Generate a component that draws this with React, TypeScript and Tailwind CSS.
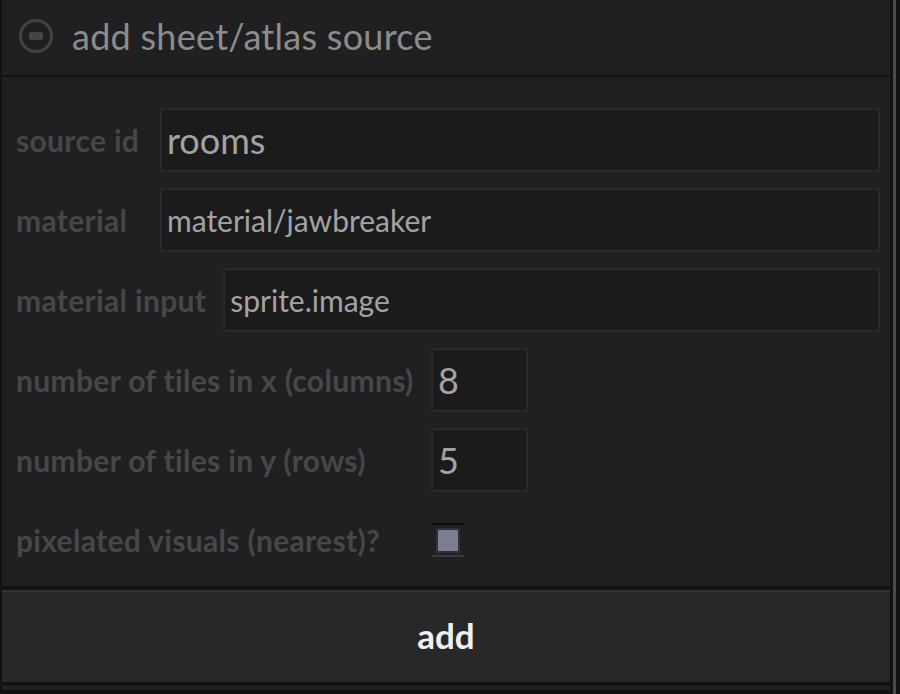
import React from "react";

const font = { fontFamily: "Lato, 'Noto Sans', sans-serif" };

function Field({ label, value, big, labelClass, inputClass }: { label: string; value: string; big?: boolean; labelClass: string; inputClass: string }) {
  return (
    <div className="flex h-[64px] items-center">
      <div className={`whitespace-nowrap text-[30px] font-bold tracking-[0.33px] text-[#474749] ${labelClass}`}>{label}</div>
      <div className={`flex h-[64px] items-center border-2 border-[#2a2a2c] bg-[#1b1b1c] pl-[5px] ${inputClass}`}>
        <span className={`${big ? "text-[36px]" : "text-[30px]"} text-[#a3a3a3] leading-none`}>{value}</span>
      </div>
    </div>
  );
}

export default function App() {
  return (
    <div className="flex h-[694px] w-[900px] overflow-hidden bg-[#121212]" style={font}>
      <div className="ml-[2px] flex w-[888px] flex-col">
        <div className="flex h-[75px] items-center bg-[#202022] pb-[3px] pl-[15px]">
          <svg width="38" height="38" viewBox="0 0 38 38">
            <circle cx="19" cy="19" r="15.5" fill="none" stroke="#444446" strokeWidth="3" />
            <rect x="12" y="15" width="14" height="8" rx="2" fill="#444446" />
          </svg>
          <span className="ml-[17px] text-[36px] tracking-[0.27px] text-[#8c8c8c]">add sheet/atlas source</span>
        </div>
        <div className="h-[2px] bg-[#121212]" />
        <div className="flex h-[509px] flex-col gap-[16px] bg-[#202022] pl-[14px] pr-[10px] pt-[31px]">
          <Field label="source id" value="rooms" big labelClass="min-w-[144px] pr-[17px]" inputClass="flex-1" />
          <Field label="material" value="material/jawbreaker" labelClass="min-w-[144px] pr-[17px]" inputClass="flex-1" />
          <Field label="material input" value="sprite.image" labelClass="min-w-[144px] pr-[17px]" inputClass="flex-1" />
          <Field label="number of tiles in x (columns)" value="8" big labelClass="w-[415px]" inputClass="w-[97px]" />
          <Field label="number of tiles in y (rows)" value="5" big labelClass="w-[415px]" inputClass="w-[97px]" />
          <div className="flex h-[64px] items-center">
            <div className="w-[416px] whitespace-nowrap text-[30px] font-bold tracking-[0.33px] text-[#474749]">pixelated visuals (nearest)?</div>
            <div className="flex h-[34px] w-[32px] items-center justify-center border-t-2 border-b-2 border-t-[#0d0d0d] border-b-[#3a3a3c]">
              <div className="h-[25px] w-[24px] border-2 border-[#303036] bg-[#7b7d92]" />
            </div>
          </div>
        </div>
        <div className="h-[4px] bg-[#121212]" />
        <div className="flex h-[92px] items-center justify-center border-t-2 border-[#323234] bg-[#28282a] pb-[3px]">
          <span className="text-[35px] font-bold text-[#f0f0f0]">add</span>
        </div>
        <div className="h-[3px] bg-[#121212]" />
        <div className="h-[5px] border border-[#1a1a1a] bg-[#222224]" />
      </div>
      <div className="ml-[3px] w-[3px] bg-[#4a4a4a]" />
    </div>
  );
}
